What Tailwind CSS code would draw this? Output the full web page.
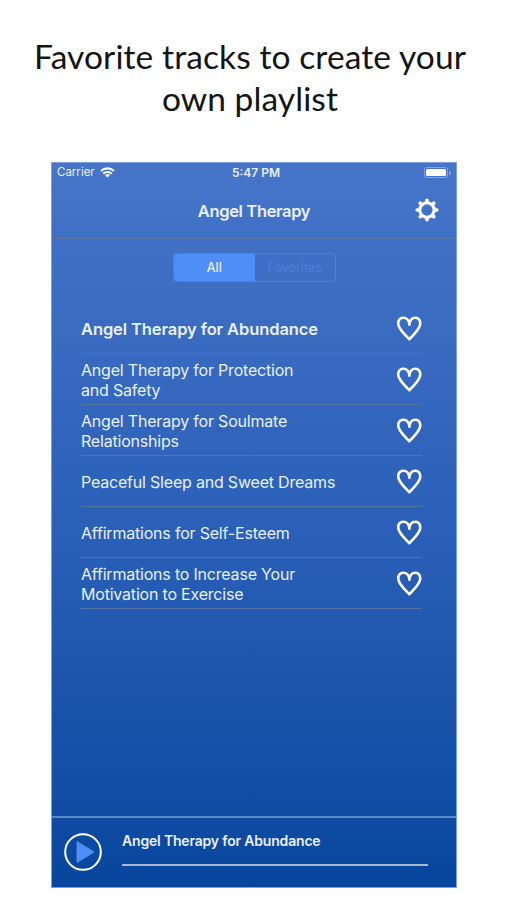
<!DOCTYPE html>
<html lang="en">
<head>
  <meta charset="UTF-8" />
  <meta name="viewport" content="width=device-width, initial-scale=1.0"/>
  <title>Angel Therapy</title>
  <script src="https://cdn.jsdelivr.net/npm/@tailwindcss/browser@4"></script>
</head>
<body class="bg-white antialiased font-['Inter',sans-serif]">

  <!-- Caption -->
  <h1 class="h-[162px] w-[500px] pt-[35px] text-center text-[33.5px] leading-[42px] text-[#141414] font-['Lato',sans-serif]">
    <span class="whitespace-nowrap tracking-[0.1px]">Favorite tracks to create your</span><br>
    <span class="whitespace-nowrap tracking-[0.1px]">own playlist</span>
  </h1>

  <!-- Phone screen -->
  <main class="ml-[51px] flex h-[726px] w-[406px] flex-col border border-[#7da0dc] bg-linear-to-b from-[#4675c9] via-[#2a60b8] to-[#07469e] text-[#e8f0ff]">

    <!-- Status bar -->
    <div class="grid h-[19px] shrink-0 grid-cols-3 items-center px-[5px] text-[11.5px]">
      <div class="flex items-center gap-[5px]">
        <span>Carrier</span>
        <svg class="h-[11px] w-[15px]" viewBox="0 0 15 11" fill="none" stroke="#fff" stroke-width="2.1">
          <path d="M1 4.1a9.2 9.2 0 0 1 13 0M3.3 6.7a6 6 0 0 1 8.4 0"/>
          <path d="M5.2 8.2a3.3 3.3 0 0 1 4.6 0L7.5 10.6z" fill="#fff" stroke="none"/>
        </svg>
      </div>
      <span class="pl-[4px] text-center text-[12px] leading-[16px] font-semibold">5:47 PM</span>
      <div class="flex items-center justify-end gap-px">
        <div class="h-[11px] w-[24px] rounded-[3px] border border-white/35 p-px"><div class="h-full rounded-[1.5px] bg-white"></div></div>
        <div class="h-[4px] w-[1.5px] rounded-r bg-white/35"></div>
      </div>
    </div>

    <!-- Nav bar -->
    <header class="flex h-[57px] shrink-0 items-center border-b border-[#5876a8] pr-[17px] pl-[41px]">
      <h2 class="flex-1 pt-[2px] text-center text-[16.5px] tracking-[-0.35px] font-semibold">Angel Therapy</h2>
      <svg class="h-6 w-6" viewBox="0 0 24 24" fill="none" stroke="#fff">
        <circle cx="12" cy="12" r="7.2" stroke-width="3.1"/>
        <path stroke-width="3.6" stroke-linecap="round" d="M12 4V2.2M12 20v1.8M4 12H2.2M20 12h1.8M6.3 6.3 5.2 5.2M17.7 6.3 18.8 5.2M6.3 17.7 5.2 18.8M17.7 17.7 18.8 18.8"/>
      </svg>
    </header>

    <!-- Filter -->
    <div class="mt-[14px] ml-[121px] grid h-[29px] w-[163px] shrink-0 grid-cols-2 overflow-hidden rounded-[4px] border border-[#4a80df] text-center text-[12.5px] leading-[28px]">
      <span class="bg-[#4f8df7] font-medium">All</span>
      <span class="text-[#4c7fd8]">Favorites</span>
    </div>

    <!-- Tracks -->
    <ul class="mt-[21px] ml-[29px] w-[341px] flex-1 text-[16px] leading-[20px] tracking-[-0.2px]">
      <li class="flex h-[51px] items-center justify-between border-b border-[#5872a0]">
        <span class="pt-[2px] text-[16.5px] tracking-[-0.1px] font-semibold">Angel Therapy for Abundance</span>
        <svg class="h-[26px] w-[26px]" viewBox="0 0 26 26" fill="none" stroke="#fff" stroke-width="2.6" stroke-linejoin="round" stroke-linecap="round"><path d="M13.4 9.6C13.2 5.500 10.800 2.800 7.200 2.800 2.800 2.800 1.200 7.200 3 11.600 5 16.200 9.500 20.500 13.300 24.200 17.200 20.500 21.500 16.200 23.500 11.600 25.300 7.200 23.500 2.800 19.400 2.800 15.900 2.800 13.600 5.500 13.400 9.600"/></svg>
      </li>
      <li class="flex h-[51px] items-center justify-between border-b border-[#5872a0]">
        <span class="pt-px">Angel Therapy for Protection<br>and Safety</span>
        <svg class="h-[26px] w-[26px]" viewBox="0 0 26 26" fill="none" stroke="#fff" stroke-width="2.6" stroke-linejoin="round" stroke-linecap="round"><path d="M13.4 9.6C13.2 5.500 10.800 2.800 7.200 2.800 2.800 2.800 1.200 7.200 3 11.600 5 16.200 9.500 20.500 13.300 24.200 17.200 20.500 21.500 16.200 23.500 11.600 25.300 7.200 23.500 2.800 19.400 2.800 15.900 2.800 13.600 5.500 13.400 9.600"/></svg>
      </li>
      <li class="flex h-[51px] items-center justify-between border-b border-[#5872a0]">
        <span class="pt-px">Angel Therapy for Soulmate<br>Relationships</span>
        <svg class="h-[26px] w-[26px]" viewBox="0 0 26 26" fill="none" stroke="#fff" stroke-width="2.6" stroke-linejoin="round" stroke-linecap="round"><path d="M13.4 9.6C13.2 5.500 10.800 2.800 7.200 2.800 2.800 2.800 1.200 7.200 3 11.600 5 16.200 9.500 20.500 13.300 24.200 17.200 20.500 21.500 16.200 23.500 11.600 25.300 7.200 23.500 2.800 19.400 2.800 15.900 2.800 13.600 5.500 13.400 9.600"/></svg>
      </li>
      <li class="flex h-[51px] items-center justify-between border-b border-[#5872a0]">
        <span class="pt-px">Peaceful Sleep and Sweet Dreams</span>
        <svg class="h-[26px] w-[26px]" viewBox="0 0 26 26" fill="none" stroke="#fff" stroke-width="2.6" stroke-linejoin="round" stroke-linecap="round"><path d="M13.4 9.6C13.2 5.500 10.800 2.800 7.200 2.800 2.800 2.800 1.200 7.200 3 11.600 5 16.200 9.500 20.500 13.300 24.200 17.200 20.500 21.500 16.200 23.500 11.600 25.300 7.200 23.500 2.800 19.400 2.800 15.900 2.800 13.600 5.500 13.400 9.600"/></svg>
      </li>
      <li class="flex h-[51px] items-center justify-between border-b border-[#5872a0]">
        <span class="pt-px">Affirmations for Self-Esteem</span>
        <svg class="h-[26px] w-[26px]" viewBox="0 0 26 26" fill="none" stroke="#fff" stroke-width="2.6" stroke-linejoin="round" stroke-linecap="round"><path d="M13.4 9.6C13.2 5.500 10.800 2.800 7.200 2.800 2.800 2.800 1.200 7.200 3 11.600 5 16.200 9.500 20.500 13.300 24.200 17.200 20.500 21.500 16.200 23.500 11.600 25.300 7.200 23.500 2.800 19.400 2.800 15.900 2.800 13.600 5.500 13.400 9.600"/></svg>
      </li>
      <li class="flex h-[51px] items-center justify-between border-b border-[#5872a0]">
        <span class="pt-px">Affirmations to Increase Your<br>Motivation to Exercise</span>
        <svg class="h-[26px] w-[26px]" viewBox="0 0 26 26" fill="none" stroke="#fff" stroke-width="2.6" stroke-linejoin="round" stroke-linecap="round"><path d="M13.4 9.6C13.2 5.500 10.800 2.800 7.200 2.800 2.800 2.800 1.200 7.200 3 11.600 5 16.200 9.500 20.500 13.300 24.200 17.200 20.500 21.500 16.200 23.500 11.600 25.300 7.200 23.500 2.800 19.400 2.800 15.900 2.800 13.600 5.500 13.400 9.600"/></svg>
      </li>
    </ul>

    <!-- Player -->
    <footer class="flex h-[71px] shrink-0 border-t-2 border-[#5c86c6] pl-[12px]">
      <svg class="mt-[15px] h-[38px] w-[38px]" viewBox="0 0 38 38">
        <circle cx="19" cy="19" r="17.8" fill="none" stroke="#fff" stroke-width="2"/>
        <path d="M13 8.5 30 19 13 29.5z" fill="#4f8df7" stroke="#4f8df7" stroke-linejoin="round"/>
      </svg>
      <div class="ml-[20px] w-[306px] pt-[13px]">
        <p class="text-[14px] leading-[20px] tracking-[-0.18px] font-semibold">Angel Therapy for Abundance</p>
        <div class="mt-[13px] h-[2px] bg-[#a9b8d2]"></div>
      </div>
    </footer>
  </main>

</body>
</html>
